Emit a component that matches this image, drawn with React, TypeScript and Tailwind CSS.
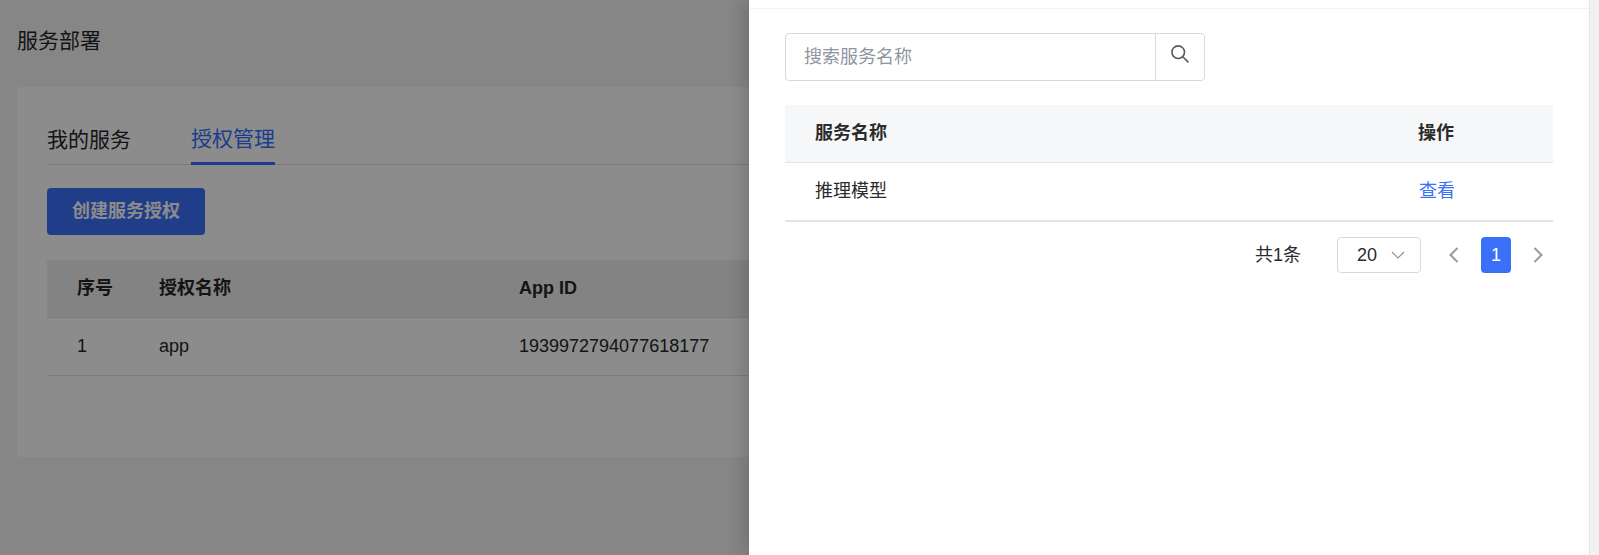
export default function App() {
  const font = { fontFamily: '"Liberation Sans", "Noto Sans CJK SC", sans-serif' };
  return (
    <div style={font} className="relative h-[555px] w-full overflow-hidden bg-[#f5f5f5] text-[#262626]">
      <div className="px-[17px]">
        <div className="flex h-[87px] items-center pb-[6px] text-[21px] leading-[28px]">服务部署</div>
        <div className="h-[370px] rounded-[4px] bg-white px-[30px] pt-[28px]">
          <div className="flex h-[50px] gap-[60px] border-b border-[#dee0e3] text-[21px]">
            <div className="flex h-[50px] items-center pb-[1px]">我的服务</div>
            <div className="flex h-[50px] items-center border-b-[3px] border-[#3370ff] pt-[1px] text-[#3370ff]">授权管理</div>
          </div>
          <button className="mt-[23px] h-[47px] w-[158px] rounded-[4px] bg-[#3a6ff8] text-[18px] font-bold text-white">创建服务授权</button>
          <div className="mt-[25px] text-[18px]">
            <div className="flex h-[58px] items-center border-b border-[#dee0e3] bg-[#eeeeee] font-bold">
              <div className="w-[112px] pl-[30px]">序号</div>
              <div className="w-[360px]">授权名称</div>
              <div>App ID</div>
            </div>
            <div className="flex h-[58px] items-center border-b border-[#dee0e3]">
              <div className="w-[112px] pl-[30px]">1</div>
              <div className="w-[360px]">app</div>
              <div>1939972794077618177</div>
            </div>
          </div>
        </div>
      </div>
      <div className="absolute inset-0 bg-black/45" />
      <div className="absolute inset-y-0 right-0 flex w-[850px] bg-white shadow-[-6px_0_16px_rgba(0,0,0,0.15)]">
        <div className="min-w-0 flex-1 text-[#2b2b2b]">
          <div className="h-[9px] border-b border-[#f2f3f5]" />
          <div className="px-[36px] pt-[24px]">
            <div className="flex h-[48px] w-[420px] rounded-[4px] border border-[#d9d9d9]">
              <div className="flex flex-1 items-center pl-[18px] text-[18px] text-[#8f959e]">搜索服务名称</div>
              <div className="flex w-[49px] items-center justify-center border-l border-[#d9d9d9]">
                <svg className="mb-[6px]" width="18" height="18" viewBox="0 0 18 18" fill="none" stroke="#595959" strokeWidth="1.6"><circle cx="7.2" cy="7.2" r="6.3" /><path d="M11.8 11.8 L17.4 17.4" /></svg>
              </div>
            </div>
            <div className="mt-[24px] text-[18px]">
              <div className="flex h-[58px] items-center border-b border-[#e1e4ec] bg-[#f6f7f9] font-bold">
                <div className="w-[633px] pl-[30px]">服务名称</div>
                <div>操作</div>
              </div>
              <div className="flex h-[59px] items-center border-b-2 border-[#e1e4ec]">
                <div className="w-[633px] pl-[30px]">推理模型</div>
                <div className="pl-[1px] text-[#3a6ff8]">查看</div>
              </div>
            </div>
            <div className="mt-[15px] flex h-[36px] items-center justify-end text-[18px]">
              <span>共1条</span>
              <div className="ml-[36px] flex h-[36px] w-[84px] items-center justify-between rounded-[4px] border border-[#d9d9d9] pl-[19px] pr-[15px]">
                <span>20</span>
                <svg width="14" height="14" viewBox="0 0 14 14" fill="none" stroke="#8f959e" strokeWidth="1.2"><path d="M1 4 L7 10 L13 4" /></svg>
              </div>
              <svg className="ml-[27px]" width="12" height="16" viewBox="0 0 12 16" fill="none" stroke="#999999" strokeWidth="2"><path d="M9.5 1 L2.5 8 L9.5 15" /></svg>
              <div className="ml-[21px] flex h-[36px] w-[30px] items-center justify-center rounded-[4px] bg-[#3a6ff8] text-white">1</div>
              <svg className="ml-[21px] mr-[9px]" width="12" height="16" viewBox="0 0 12 16" fill="none" stroke="#999999" strokeWidth="2"><path d="M2.5 1 L9.5 8 L2.5 15" /></svg>
            </div>
          </div>
        </div>
        <div className="w-[10px] border-l border-[#e5e5e5] bg-[#f1f1f1]" />
      </div>
    </div>
  );
}
